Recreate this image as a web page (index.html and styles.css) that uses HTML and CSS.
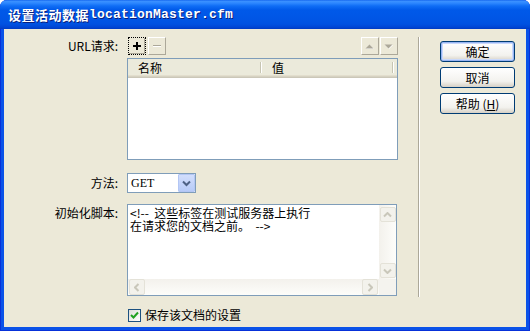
FILE: index.html
```html
<!DOCTYPE html>
<html lang="zh-CN">
<head>
    <meta charset="UTF-8">
    <title>设置活动数据</title>
    <link rel="stylesheet" href="styles.css">
</head>
<body>
    <div class="window">
        <div class="titlebar">
            <span class="title-cn">设置活动数据</span><span class="title-file">locationMaster.cfm</span>
        </div>
        <div class="client">
            <div class="form">
                <div class="row">
                    <div class="row-label">URL请求:</div>
                    <div class="toolbar">
                        <button class="tool focused">
                            <svg width="10" height="10" viewBox="0 0 10 10"><path d="M4 1h2v3h3v2H6v3H4V6H1V4h3z" fill="#000"/></svg>
                        </button>
                        <button class="tool">
                            <svg width="10" height="10" viewBox="0 0 10 10"><rect x="1" y="5" width="8" height="1" fill="#fff"/><rect x="1" y="4" width="8" height="1" fill="#ACA899"/></svg>
                        </button>
                        <span class="spacer"></span>
                        <button class="tool">
                            <svg width="10" height="7" viewBox="0 0 10 7"><path d="M5 2L9 6H1z" fill="#fff"/><path d="M4.5 1.5L8.5 5.5H0.5z" fill="#ACA899"/></svg>
                        </button>
                        <button class="tool">
                            <svg width="10" height="7" viewBox="0 0 10 7"><path d="M1 2H9L5 6z" fill="#fff"/><path d="M0.5 1.5H8.5L4.5 5.5z" fill="#ACA899"/></svg>
                        </button>
                    </div>
                </div>

                <div class="row row-list">
                    <div class="row-label"></div>
                    <div class="list">
                        <div class="list-head">
                            <div class="col col-name">名称</div>
                            <div class="col col-value">值</div>
                        </div>
                    </div>
                </div>

                <div class="row row-method">
                    <div class="row-label">方法:</div>
                    <div class="select">
                        <span class="select-text">GET</span>
                        <span class="select-btn">
                            <svg width="9" height="7" viewBox="0 0 9 7"><path d="M1 1.5l3.5 3.5L8 1.5" stroke="#4D6185" stroke-width="2" fill="none"/></svg>
                        </span>
                    </div>
                </div>

                <div class="row row-script">
                    <div class="row-label">初始化脚本:</div>
                    <div class="script">
                        <div class="script-text">&lt;!--  这些标签在测试服务器上执行
在请求您的文档之前。  --&gt;</div>
                        <div class="vscroll">
                            <span class="sbtn">
                                <svg width="9" height="6" viewBox="0 0 9 6"><path d="M1 4.5l3.5-3.5L8 4.5" stroke="#C9C7BA" stroke-width="2" fill="none"/></svg>
                            </span>
                            <span class="sbtn">
                                <svg width="9" height="6" viewBox="0 0 9 6"><path d="M1 1.5l3.5 3.5L8 1.5" stroke="#C9C7BA" stroke-width="2" fill="none"/></svg>
                            </span>
                        </div>
                        <div class="hscroll">
                            <span class="sbtn">
                                <svg width="6" height="9" viewBox="0 0 6 9"><path d="M4.5 1L1 4.5L4.5 8" stroke="#C9C7BA" stroke-width="2" fill="none"/></svg>
                            </span>
                            <span class="sbtn">
                                <svg width="6" height="9" viewBox="0 0 6 9"><path d="M1.5 1L5 4.5L1.5 8" stroke="#C9C7BA" stroke-width="2" fill="none"/></svg>
                            </span>
                        </div>
                        <div class="corner"></div>
                    </div>
                </div>

                <div class="row row-check">
                    <div class="row-label"></div>
                    <label class="check">
                        <span class="check-box">
                            <svg width="9" height="9" viewBox="0 0 9 9"><path d="M1 4l2.5 2.5L8 1.5" stroke="#21A121" stroke-width="2" fill="none"/></svg>
                        </span>
                        保存该文档的设置
                    </label>
                </div>
            </div>

            <div class="separator"></div>

            <div class="actions">
                <button class="btn default">确定</button>
                <button class="btn">取消</button>
                <button class="btn">帮助 (<u>H</u>)</button>
            </div>
        </div>
    </div>
</body>
</html>
```

FILE: styles.css
```css
* {
    box-sizing: border-box;
}
body {
    margin: 0;
    width: 530px;
    height: 331px;
    overflow: hidden;
    background: #fff;
    font-family: "Noto Sans CJK SC", sans-serif;
    font-size: 12px;
    color: #000;
}
.window {
    width: 530px;
    height: 331px;
    display: flex;
    flex-direction: column;
    background: #0A52E8;
    border-radius: 7px 7px 0 0;
    overflow: hidden;
    box-shadow: inset 1px 0 #0831D9, inset -1px 0 #0831D9, inset 0 -1px #0831D9;
}
.titlebar {
    height: 29px;
    flex: none;
    display: flex;
    align-items: center;
    padding: 0 0 1px 8px;
    color: #fff;
    font-weight: bold;
    font-size: 13px;
    text-shadow: 1px 1px 0 #0A1F7D;
    background: linear-gradient(to bottom, #0A5BEA 0, #3D92FF 1px, #2E88FF 3px, #0F6DF5 6px, #0059E9 10px, #0056E6 18px, #0052E1 24px, #0047D6 27px, #003BC1 29px);
}
.title-cn {
    letter-spacing: 0.5px;
}
.title-file {
    font-family: "Liberation Mono", monospace;
    letter-spacing: 0.2px;
}
.client {
    flex: 1;
    margin: 0 4px 4px;
    background: #ECE9D8;
    display: flex;
}

/* form column */
.form {
    width: 394px;
    padding-top: 8px;
    display: flex;
    flex-direction: column;
}
.row {
    display: flex;
    align-items: center;
}
.row-label {
    width: 123px;
    flex: none;
    text-align: right;
    padding-right: 9px;
    white-space: nowrap;
    line-height: 14px;
}
.row-list {
    margin-top: 3px;
}
.row-method {
    margin-top: 13px;
}
.row-script {
    margin-top: 11px;
    align-items: flex-start;
}
.row-script .row-label {
    padding-top: 2px;
}
.row-check {
    margin-top: 12px;
}

.toolbar {
    width: 271px;
    height: 18px;
    display: flex;
    gap: 2px;
    padding-left: 1px;
}
.spacer {
    flex: 1;
}
.toolbar .spacer + .tool {
    margin-right: -1px;
}
.tool {
    width: 18px;
    height: 18px;
    padding: 0;
    display: flex;
    align-items: center;
    justify-content: center;
    background: #ECE9D8;
    border: 1px solid;
    border-color: #fff #ACA899 #ACA899 #fff;
}
.tool.focused {
    border: 1px dotted #000;
    box-shadow: inset -1px -1px 0 #ACA899;
}

.list {
    width: 271px;
    height: 102px;
    border: 1px solid #7F9DB9;
    background: #fff;
}
.list-head {
    display: flex;
    height: 19px;
    background: #EBEADB;
    box-shadow: inset 0 -1px #CBC7B8, inset 0 -2px #D6D2C2, inset 0 -3px #E2DECD;
}
.col {
    position: relative;
    padding-left: 10px;
    line-height: 17px;
}
.col::after {
    content: "";
    position: absolute;
    right: 1px;
    top: 3px;
    bottom: 5px;
    width: 1px;
    background: #C7C5B2;
    box-shadow: 1px 0 #fff;
}
.col-name {
    width: 134px;
}
.col-value {
    width: 132px;
}

.select {
    width: 69px;
    height: 20px;
    border: 1px solid #7F9DB9;
    background: #fff;
    display: flex;
    align-items: center;
}
.select-text {
    padding-left: 3px;
    flex: 1;
    font-family: "Liberation Serif", serif;
    font-size: 12px;
}
.select-btn {
    width: 17px;
    height: 18px;
    display: flex;
    align-items: center;
    justify-content: center;
    background: linear-gradient(to bottom, #D2DEFC, #B7CBF8);
    border: 1px solid #B3C6F4;
    border-radius: 1px;
}

.script {
    width: 270px;
    height: 92px;
    border: 1px solid #7F9DB9;
    background: #fff;
    display: grid;
    grid-template-columns: 1fr 17px;
    grid-template-rows: 1fr 16px;
}
.script-text {
    padding: 1px 2px;
    line-height: 13px;
    white-space: pre;
    overflow: hidden;
}
.vscroll {
    display: flex;
    flex-direction: column;
    justify-content: space-between;
    align-items: center;
    padding: 2px 0 1px;
    background: linear-gradient(to right, #F3F1EC, #FDFDFA);
}
.hscroll {
    display: flex;
    justify-content: space-between;
    align-items: center;
    padding: 0 1px;
    background: linear-gradient(to bottom, #F3F1EC, #FDFDFA);
}
.corner {
    background: #F4F3EE;
}
.sbtn {
    width: 16px;
    height: 16px;
    display: flex;
    align-items: center;
    justify-content: center;
    background: #F3F2EC;
    border: 1px solid #E4E2D8;
    border-radius: 2px;
}
.vscroll .sbtn {
    height: 15px;
}
.hscroll .sbtn {
    width: 16px;
    height: 16px;
}

.check {
    display: flex;
    align-items: center;
    gap: 4px;
    margin-left: 1px;
    line-height: 14px;
}
.check-box {
    width: 13px;
    height: 13px;
    border: 1px solid #1C5180;
    background: linear-gradient(135deg, #DCDCD7, #fff);
    display: flex;
    align-items: center;
    justify-content: center;
}

/* separator and buttons */
.separator {
    width: 2px;
    margin: 8px 0 30px 20px;
    border-left: 1px solid #ACA899;
    border-right: 1px solid #fff;
}
.actions {
    padding: 12px 0 0 20px;
    display: flex;
    flex-direction: column;
    gap: 5px;
}
.btn {
    width: 75px;
    height: 21px;
    padding: 0;
    border: 1px solid #003C74;
    border-radius: 3px;
    background: linear-gradient(to bottom, #FFFFFF, #F3F2EE 70%, #D6D0C5);
    font-family: "Noto Sans CJK SC", sans-serif;
    font-size: 12px;
    line-height: 18px;
    color: #000;
}
.btn.default {
    box-shadow: inset 0 0 0 1px #97B4F2, inset 0 0 0 2px #CAD9FB;
}
```
